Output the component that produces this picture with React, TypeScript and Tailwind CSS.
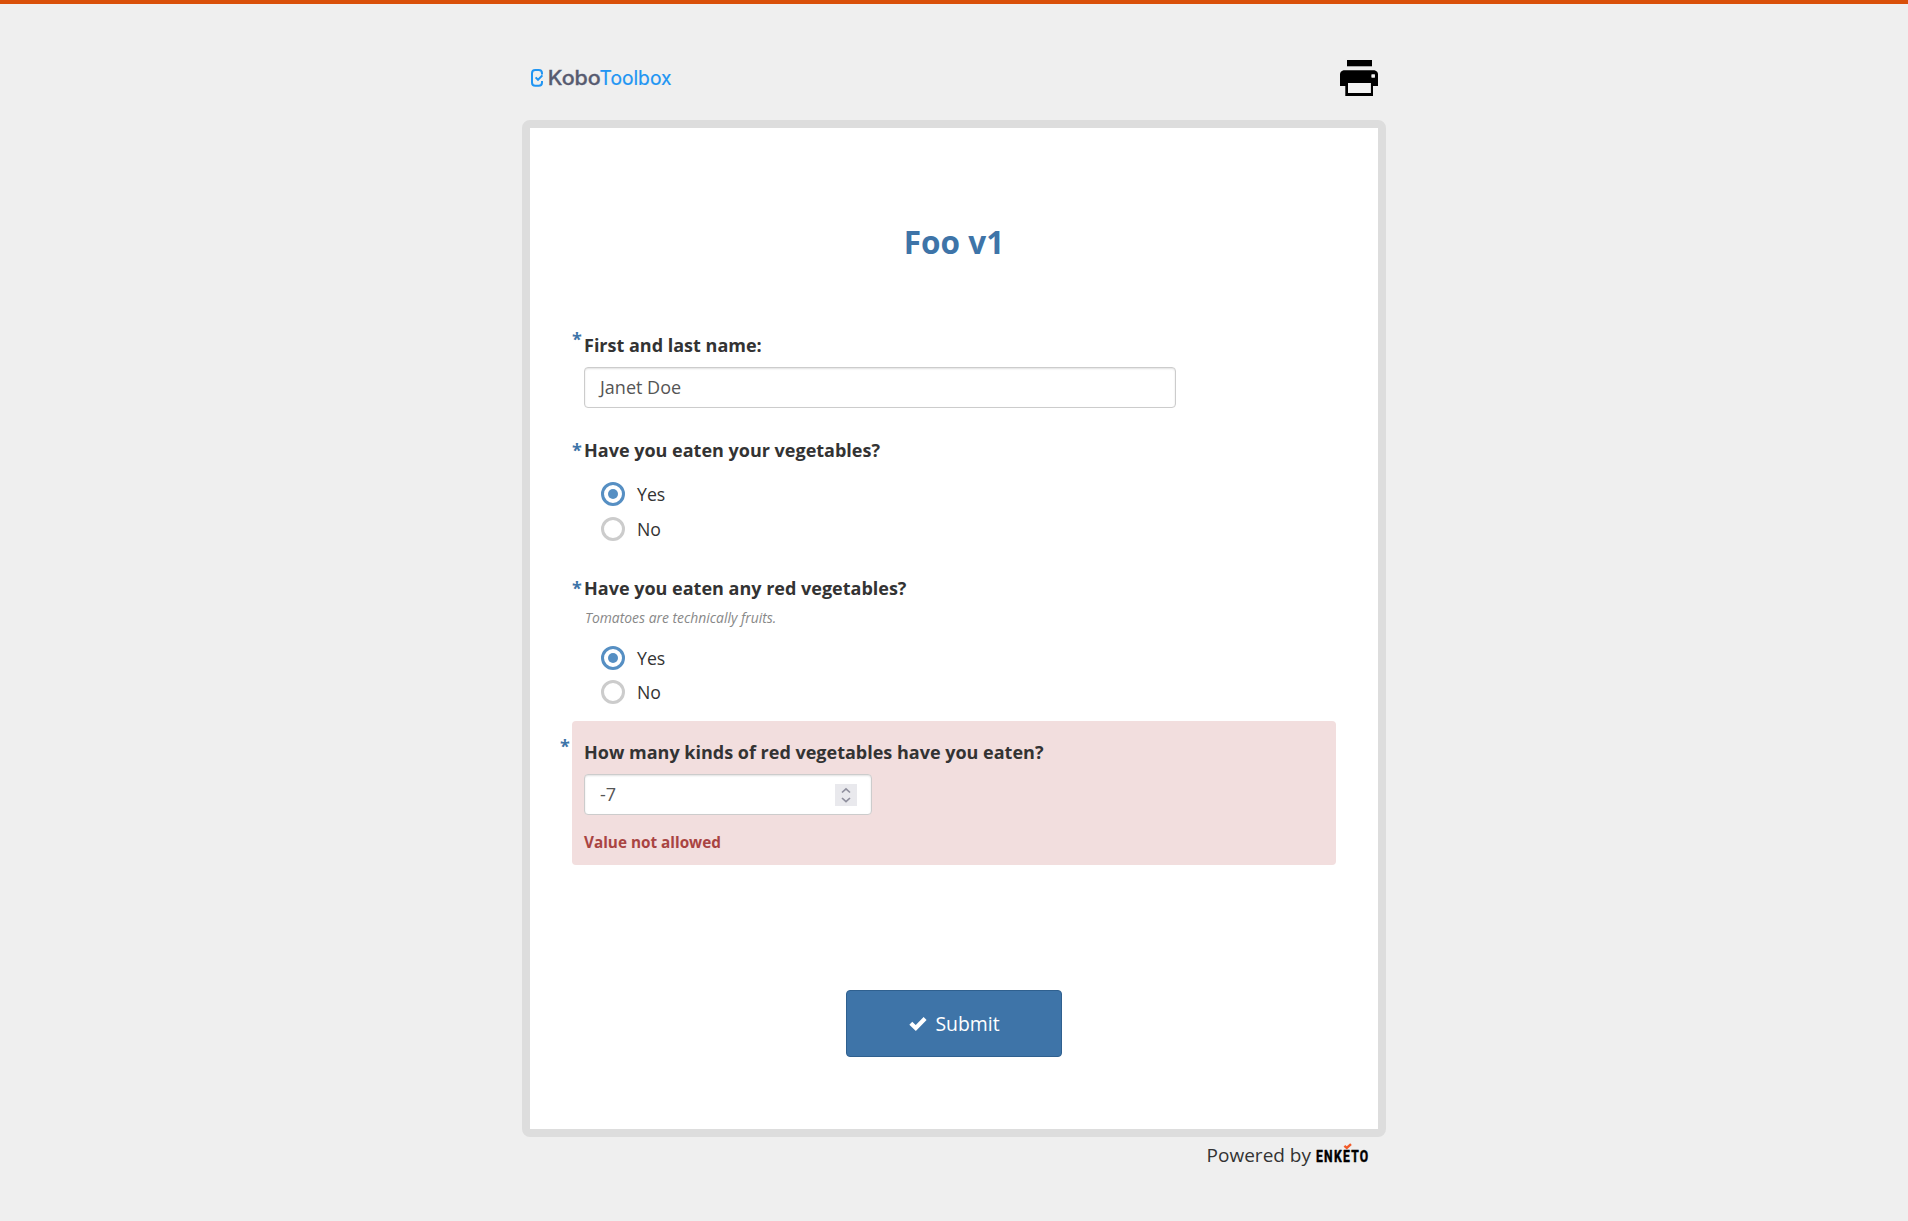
import type { ReactNode } from "react";

function KoboLogo() {
  return (
    <svg width="146" height="24" viewBox="0 0 146 24" overflow="visible" className="block" aria-label="KoboToolbox">
      <path
        d="M12 6.4V5.2Q12 1.9 8.7 1.9H5.3Q2 1.9 2 5.2V14.4Q2 17.7 5.3 17.7H8.7Q12 17.7 12 14.4V13"
        fill="none"
        stroke="#2095f3"
        strokeWidth="2"
      />
      <path d="M5.6 9.4L8 11.8L12.4 7.4" fill="none" stroke="#2095f3" strokeWidth="2" />
      <text x="17.8" y="17.3" textLength="53" lengthAdjust="spacingAndGlyphs" fontFamily="Inter" fontWeight="500" fontSize="19.8" fill="#575b70" stroke="#575b70" strokeWidth="0.3">
        Kobo
      </text>
      <text x="69.5" y="17.3" textLength="72" lengthAdjust="spacingAndGlyphs" fontFamily="Inter" fontWeight="400" fontSize="19.8" fill="#2095f3" stroke="#2095f3" strokeWidth="0.2">
        Toolbox
      </text>
    </svg>
  );
}

function PrintIcon() {
  return (
    <svg width="38" height="36" viewBox="0 0 38 36" className="block">
      <path d="M7 0h25v6.3H7z" fill="#000" />
      <path
        fillRule="evenodd"
        d="M3.5 10.3h31Q38 11.3 38 14.3V26H33V36H5.3V26H0V14.3Q0 11.3 3.5 10.3zM8 23V33.1H30.7V23zM31.6 14.5v3h3.2v-3z"
        fill="#000"
      />
      <path d="M8 23h22.7v10.1H8zM31.6 14.5h3.2v3h-3.2z" fill="#f4f4f4" />
    </svg>
  );
}

function EnketoLogo() {
  return (
    <svg width="52" height="24" viewBox="0 0 52 24" overflow="visible" className="block">
      <text
        x="0"
        y="20.3"
        textLength="71.5"
        lengthAdjust="spacing"
        fontFamily="Roboto"
        fontWeight="700"
        fontSize="16.6"
        fill="#000"
        stroke="#000"
        strokeWidth="0.5"
        strokeLinejoin="round"
        transform="scale(0.73 1)"
      >
        ENKETO
      </text>
      <path d="M28.4 3.8L30.8 6L35 2.2" fill="none" stroke="#f15a29" strokeWidth="2.4" />
    </svg>
  );
}

function Star({ className }: { className: string }) {
  return <span className={`absolute text-[18px] leading-6 text-[#3e74a8] font-bold ${className}`}>*</span>;
}

function Label({ children }: { children: ReactNode }) {
  return <div className="h-6 text-[18px] font-bold leading-6 whitespace-nowrap">{children}</div>;
}

function Choice({ label, checked }: { label: string; checked?: boolean }) {
  return (
    <label className="flex items-center gap-3">
      <span
        className={`flex size-6 items-center justify-center rounded-full border-3 bg-white ${
          checked ? "border-[#568fc3]" : "border-[#ccc]"
        }`}
      >
        {checked && <span className="size-[10px] rounded-full bg-[#568fc3]" />}
      </span>
      <span className="-mt-px text-[17.7px] leading-6">{label}</span>
    </label>
  );
}

function Field({ className, children }: { className: string; children: ReactNode }) {
  return (
    <div
      className={`flex h-[41px] items-center justify-between rounded border border-[#ccc] bg-white px-[14px] text-[18px] leading-6 text-[#555] shadow-[inset_0_1px_2px_rgba(0,0,0,0.12)] ${className}`}
    >
      {children}
    </div>
  );
}

export default function App() {
  return (
    <div className="h-[1221px] overflow-hidden border-t-4 border-[#d9500a] bg-[#efefef] font-['Open_Sans',sans-serif] text-[#333]">
      <div className="mx-auto w-[864px]">
        <header className="flex h-[116px] items-start justify-between pr-2 pl-2">
          <div className="pt-[64px]">
            <KoboLogo />
          </div>
          <div className="pt-[56px]">
            <PrintIcon />
          </div>
        </header>

        <main className="h-[1017px] rounded-[8px] border-8 border-[#ddd] bg-white px-[42px]">
          <h1 className="pt-[90px] text-center text-[31.5px] leading-[48px] font-bold text-[#3e74a8]">Foo v1</h1>

          <section className="relative mt-[67px] pl-3">
            <Star className="-top-[6px] left-0" />
            <Label>First and last name:</Label>
            <Field className="mt-[10px] w-[592px]">
              <span className="-mt-px pl-px">Janet Doe</span>
            </Field>
          </section>

          <section className="relative mt-[30px] pl-3">
            <Star className="top-0 left-0" />
            <Label>Have you eaten your vegetables?</Label>
            <div className="mt-5 flex flex-col gap-[11px] pl-[17px]">
              <Choice label="Yes" checked />
              <Choice label="No" />
            </div>
          </section>

          <section className="relative mt-[35px] pl-3">
            <Star className="top-0 left-0" />
            <Label>Have you eaten any red vegetables?</Label>
            <p className="mt-2 h-5 pl-px text-[13.9px] leading-5 text-[#888] italic">Tomatoes are technically fruits.</p>
            <div className="mt-[18px] flex flex-col gap-[10px] pl-[17px]">
              <Choice label="Yes" checked />
              <Choice label="No" />
            </div>
          </section>

          <section className="relative mt-[17px] h-[144px] rounded bg-[#f2dede] px-3 pt-[19px]">
            <Star className="top-[13px] -left-3" />
            <Label>How many kinds of red vegetables have you eaten?</Label>
            <Field className="mt-[10px] w-[288px]">
              <span className="-mt-px pl-px">-7</span>
              <span className="flex size-[22px] items-center justify-center bg-[#e9e9ed]">
                <svg width="10" height="16" viewBox="0 0 10 16" fill="none" stroke="#8f8f9d" strokeWidth="1.7">
                  <path d="M1 5.5L5 1.8L9 5.5M1 11L5 14.7L9 11" />
                </svg>
              </span>
            </Field>
            <p className="mt-[17px] text-[15.3px] leading-5 font-bold text-[#a94442]">Value not allowed</p>
          </section>

          <button className="mx-auto mt-[125px] flex h-[67px] w-[216px] items-center justify-center rounded border border-[#2f608f] bg-[#3e74a8] text-[19.4px] text-white">
            <svg width="18" height="15" viewBox="0 0 18 15" className="mr-[8px] ml-px">
              <path d="M1.8 7.2L6.8 12L16.1 2.6" fill="none" stroke="#fff" strokeWidth="4.2" />
            </svg>
            Submit
          </button>
        </main>

        <footer className="flex justify-end gap-[5px] pr-[18px]">
          <span className="pt-[4px] text-[19px] leading-[28px]">Powered by</span>
          <div className="pt-[5px]">
            <EnketoLogo />
          </div>
        </footer>
      </div>
    </div>
  );
}
